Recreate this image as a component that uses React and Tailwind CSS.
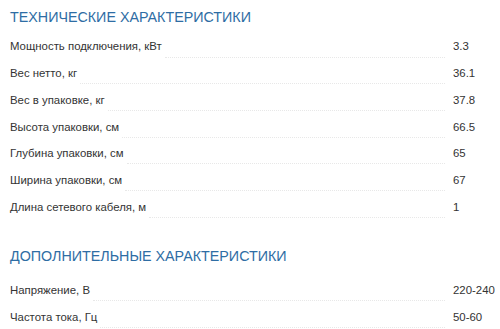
const tech = [
  ['Мощность подключения, кВт', '3.3'],
  ['Вес нетто, кг', '36.1'],
  ['Вес в упаковке, кг', '37.8'],
  ['Высота упаковки, см', '66.5'],
  ['Глубина упаковки, см', '65'],
  ['Ширина упаковки, см', '67'],
  ['Длина сетевого кабеля, м', '1'],
]

const extra = [
  ['Напряжение, В', '220-240'],
  ['Частота тока, Гц', '50-60'],
]

function Row({ label, value }) {
  return (
    <div className="flex items-center h-[26.7px] text-[11.4px] text-[#333]">
      <span className="whitespace-nowrap">{label}</span>
      <span className="flex-1 self-center mt-[20px] ml-[3px] mr-[8px] border-b border-dotted border-[#e8e8e8]" />
      <span className="w-[47px] shrink-0">{value}</span>
    </div>
  )
}

export default function App() {
  return (
    <div className="w-[500px] h-[329px] bg-white pl-[10px] pt-[7px] overflow-hidden" style={{ fontFamily: '"Liberation Sans", Arial, sans-serif' }}>
      <h2 className="text-[14.3px] leading-[20px] text-[#2e6da4] uppercase">Технические характеристики</h2>
      <div className="mt-[6.7px]">
        {tech.map(([l, v]) => <Row key={l} label={l} value={v} />)}
      </div>
      <h2 className="mt-[25px] text-[14.3px] leading-[20px] text-[#2e6da4] uppercase">Дополнительные характеристики</h2>
      <div className="mt-[11.7px]">
        {extra.map(([l, v]) => <Row key={l} label={l} value={v} />)}
      </div>
    </div>
  )
}
